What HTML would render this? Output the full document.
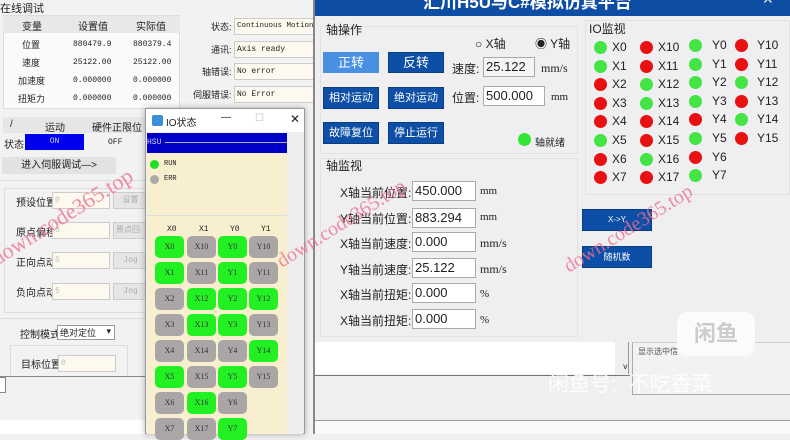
<!DOCTYPE html><html><head><meta charset="utf-8"><style>
*{margin:0;padding:0;box-sizing:border-box}
body{width:790px;height:434px;overflow:hidden;background:#f0f0f0;position:relative;font-family:"Liberation Sans","Noto Sans CJK SC",sans-serif;font-size:11px;color:#222}
.a{position:absolute}
.m{font-family:"Liberation Mono","Noto Sans CJK SC",monospace;font-size:8px}
.inp{position:absolute;background:#fff;border:1px solid #aaa;font-size:13px;padding-left:2px;line-height:18px}
.btn{position:absolute;background:#0d4ea6;color:#fff;text-align:center;font-size:12px;border:1px solid #0a3d80}
.io{position:absolute;width:29px;height:22px;border-radius:5px;background:#aaa6a6;font-size:8px;text-align:center;line-height:22px;font-family:"Liberation Serif",serif;color:#333}
.g{background:#22f022}
.d{position:absolute;width:13px;height:13px;border-radius:50%}
.dg{background:#44e444}.dr{background:#e81010}
.lb{position:absolute;font-size:12px}
.fld{position:absolute;background:#fdf9ee;border:1px solid #ccc;height:17px;font-family:"Liberation Mono",monospace;font-size:8px;line-height:15px;padding-left:2px;white-space:nowrap;overflow:hidden}
.wm{position:absolute;color:#f07090;font-family:"Liberation Serif",serif;font-size:20px;transform:rotate(-32deg);transform-origin:left bottom;white-space:nowrap;opacity:.8}
</style></head><body>
<div class="a" style="left:0;top:0;width:315px;height:434px;background:#f2f2f2"></div>
<div class="a" style="left:0;top:0;font-size:11px">在线调试</div>
<div class="a" style="left:3px;top:15px;width:177px;height:94px;background:#fafafa;border:1px solid #ddd"></div>
<div class="a" style="left:3px;top:16px;width:177px;height:17px;background:#e8e8e8"></div>
<div class="a" style="left:0;top:18px;width:315px;font-size:10px">
<span class="a" style="left:22px">变量</span><span class="a" style="left:78px">设置值</span><span class="a" style="left:136px">实际值</span></div>
<div class="a" style="left:0;top:36px;font-size:9px;line-height:18px;width:180px">
<div style="position:relative;height:18px"><span class="a" style="left:22px">位置</span><span class="a m" style="left:73px">880479.9</span><span class="a m" style="left:133px">880379.4</span></div>
<div style="position:relative;height:18px"><span class="a" style="left:22px">速度</span><span class="a m" style="left:73px">25122.00</span><span class="a m" style="left:133px">25122.00</span></div>
<div style="position:relative;height:18px"><span class="a" style="left:18px">加速度</span><span class="a m" style="left:73px">0.000000</span><span class="a m" style="left:133px">0.000000</span></div>
<div style="position:relative;height:18px"><span class="a" style="left:18px">扭矩力</span><span class="a m" style="left:73px">0.000000</span><span class="a m" style="left:133px">0.000000</span></div></div>
<div class="a" style="left:211px;top:20px;font-size:9px">状态:</div><div class="fld" style="left:234px;top:18px;width:82px;font-size:7.5px">Continuous Motion</div>
<div class="a" style="left:211px;top:43px;font-size:9px">通讯:</div><div class="fld" style="left:234px;top:41px;width:82px">Axis ready</div>
<div class="a" style="left:202px;top:65px;font-size:9px">轴错误:</div><div class="fld" style="left:234px;top:63px;width:82px">No error</div>
<div class="a" style="left:193px;top:88px;font-size:9px">伺服错误:</div><div class="fld" style="left:234px;top:86px;width:82px">No Error</div>
<div class="a" style="left:3px;top:117px;width:145px;height:16px;background:#e6e6e6"></div>
<div class="a" style="left:10px;top:119px;font-size:10px">/</div><div class="a" style="left:45px;top:119px;font-size:10px">运动</div><div class="a" style="left:92px;top:119px;font-size:10px">硬件正限位</div>
<div class="a" style="left:4px;top:136px;font-size:10px">状态</div>
<div class="a m" style="left:25px;top:134px;width:59px;height:16px;background:#0000ee;color:#ccf;text-align:center;line-height:16px">ON</div>
<div class="a m" style="left:108px;top:138px">OFF</div>
<div class="a" style="left:2px;top:157px;width:114px;height:17px;background:#e2e2e2;font-size:10px;text-align:center;line-height:17px">进入伺服调试—></div>
<div class="a" style="left:0;top:180px;width:145px;border-top:1px solid #ddd"></div>
<div class="a" style="left:4px;top:188px;width:142px;height:125px;border:1px solid #ddd"></div>
<div class="a" style="left:16px;top:194px;font-size:10px">预设位置</div><div class="fld" style="left:52px;top:192px;width:58px;color:#bbb">0</div><div class="fld" style="left:113px;top:192px;width:33px;background:#e6e6e6;color:#aaa;text-align:center">设置</div>
<div class="a" style="left:16px;top:224px;font-size:10px">原点偏移</div><div class="fld" style="left:52px;top:222px;width:58px;color:#bbb">0</div><div class="fld" style="left:113px;top:222px;width:33px;background:#e6e6e6;color:#aaa">原点回</div>
<div class="a" style="left:16px;top:254px;font-size:10px">正向点动</div><div class="fld" style="left:52px;top:252px;width:58px;color:#bbb">5</div><div class="fld" style="left:113px;top:252px;width:33px;background:#e6e6e6;color:#aaa;text-align:center">Jog</div>
<div class="a" style="left:16px;top:284px;font-size:10px">负向点动</div><div class="fld" style="left:52px;top:283px;width:58px;color:#bbb">5</div><div class="fld" style="left:113px;top:283px;width:33px;background:#e6e6e6;color:#aaa;text-align:center">Jog</div>
<div class="a" style="left:0;top:318px;width:145px;border-top:1px solid #ddd"></div>
<div class="a" style="left:20px;top:326px;font-size:10px">控制模式</div>
<div class="a" style="left:57px;top:325px;width:58px;height:15px;background:#fff;border:1px solid #999;font-size:9px;padding-left:2px">绝对定位 <span style="float:right;padding-right:3px">▾</span></div>
<div class="a" style="left:10px;top:345px;width:118px;height:32px;border:1px solid #ddd"></div>
<div class="a" style="left:21px;top:356px;font-size:10px">目标位置</div><div class="fld" style="left:58px;top:355px;width:58px;color:#bbb">0</div>
<div class="a" style="left:0;top:376px;width:145px;border-top:1px solid #888"></div>
<div class="a" style="left:0;top:377px;width:6px;height:16px;border:1px solid #888;border-left:0;background:#fff"></div>
<div class="a" style="left:0;top:420px;width:145px;height:14px;background:#fff"></div>
<div class="a" style="left:313px;top:0;width:477px;height:434px;background:#efeff1;border-left:2px solid #888"></div>
<div class="a" style="left:315px;top:0;width:475px;height:16px;background:#0d4da3;overflow:hidden"><div class="a" style="left:108px;top:-12px;color:#fff;font-weight:bold;font-size:17px">汇川H5U与C#模拟仿真平台</div><div class="a" style="left:447px;top:-9px;color:#ddd;font-size:14px">✕</div></div>
<div class="a" style="left:320px;top:26px;width:258px;height:128px;border:1px solid #e2e2e2"></div>
<div class="lb" style="left:326px;top:21px">轴操作</div>
<div class="a" style="left:475px;top:35px;font-size:12px">○ X轴</div><div class="a" style="left:535px;top:35px;font-size:12px">◉ Y轴</div>
<div class="btn" style="left:323px;top:52px;width:56px;height:21px;background:#4a90e2;border-color:#4a90e2;line-height:19px;font-size:13px">正转</div>
<div class="btn" style="left:388px;top:52px;width:56px;height:21px;line-height:19px;font-size:13px">反转</div>
<div class="btn" style="left:323px;top:87px;width:56px;height:22px;line-height:20px;font-size:11px">相对运动</div>
<div class="btn" style="left:388px;top:87px;width:56px;height:22px;line-height:20px;font-size:11px">绝对运动</div>
<div class="btn" style="left:323px;top:122px;width:56px;height:22px;line-height:20px;font-size:11px">故障复位</div>
<div class="btn" style="left:388px;top:122px;width:56px;height:22px;line-height:20px;font-size:11px">停止运行</div>
<div class="lb" style="left:452px;top:60px">速度:</div><div class="inp" style="left:483px;top:57px;width:52px;height:20px;background:#f5f5f5">25.122</div><div class="a" style="left:541px;top:61px;font-family:'Liberation Serif',serif;font-size:12px">mm/s</div>
<div class="lb" style="left:452px;top:89px">位置:</div><div class="inp" style="left:483px;top:86px;width:62px;height:20px">500.000</div><div class="a" style="left:551px;top:91px;font-family:'Liberation Serif',serif;font-size:11px">mm</div>
<div class="d" style="left:518px;top:133px;background:#33e633"></div><div class="a" style="left:535px;top:134px;font-size:10px">轴就绪</div>
<div class="a" style="left:320px;top:158px;width:258px;height:179px;border:1px solid #e2e2e2"></div>
<div class="lb" style="left:326px;top:157px">轴监视</div>
<div class="lb" style="left:340px;top:184px">X轴当前位置:</div><div class="inp" style="left:412px;top:181px;width:64px;height:20px">450.000</div><div class="a" style="left:480px;top:185px;font-family:'Liberation Serif',serif">mm</div>
<div class="lb" style="left:340px;top:210px">Y轴当前位置:</div><div class="inp" style="left:412px;top:208px;width:64px;height:20px">883.294</div><div class="a" style="left:480px;top:211px;font-family:'Liberation Serif',serif">mm</div>
<div class="lb" style="left:340px;top:235px">X轴当前速度:</div><div class="inp" style="left:412px;top:232px;width:64px;height:20px">0.000</div><div class="a" style="left:480px;top:236px;font-family:'Liberation Serif',serif;font-size:12px">mm/s</div>
<div class="lb" style="left:340px;top:261px">Y轴当前速度:</div><div class="inp" style="left:412px;top:258px;width:64px;height:20px">25.122</div><div class="a" style="left:480px;top:262px;font-family:'Liberation Serif',serif;font-size:12px">mm/s</div>
<div class="lb" style="left:340px;top:286px">X轴当前扭矩:</div><div class="inp" style="left:412px;top:283px;width:64px;height:20px">0.000</div><div class="a" style="left:480px;top:288px;font-family:'Liberation Serif',serif">%</div>
<div class="lb" style="left:340px;top:312px">X轴当前扭矩:</div><div class="inp" style="left:412px;top:309px;width:64px;height:20px">0.000</div><div class="a" style="left:480px;top:314px;font-family:'Liberation Serif',serif">%</div>
<div class="a" style="left:315px;top:342px;width:300px;height:32px;background:#fff"></div>
<div class="a" style="left:615px;top:342px;width:14px;height:32px;border-right:1px solid #999;font-size:9px;text-align:right;padding-top:20px">˅</div>
<div class="a" style="left:315px;top:375px;width:475px;border-top:1px solid #777"></div>
<div class="a" style="left:632px;top:342px;width:158px;height:53px;border-left:1px solid #aaa;border-top:1px solid #ccc;border-bottom:1px solid #aaa;background:#f2f2f2"><span style="font-size:8px;color:#555;position:absolute;left:5px;top:3px">显示选中信</span></div>
<div class="a" style="left:315px;top:420px;width:475px;border-top:1px solid #999"></div>
<div class="a" style="left:315px;top:421px;width:475px;height:13px;background:#fafafa"></div>
<div class="a" style="left:677px;top:312px;width:78px;height:44px;background:#fbfbfb;border-radius:10px;color:#ccc;font-size:22px;font-weight:bold;text-align:center;line-height:44px">闲鱼</div>
<div class="a" style="left:548px;top:368px;color:#fff;font-size:21px;opacity:.9">闲鱼号:&nbsp; 不吃香菜</div>
<div class="a" style="left:585px;top:20px;width:205px;height:175px;border:1px solid #e2e2e2"></div>
<div class="lb" style="left:589px;top:20px">IO监视</div>
<div id="iom"></div>
<div class="btn" style="left:582px;top:209px;width:70px;height:22px;font-size:8px;line-height:20px">X->Y</div>
<div class="btn" style="left:582px;top:246px;width:70px;height:22px;font-size:9px;line-height:20px">随机数</div>
<div class="a" style="left:145px;top:108px;width:160px;height:326px;background:#f0f0f0;border:1px solid #999;box-shadow:0 0 6px rgba(0,0,0,.3)"></div>
<div class="a" style="left:146px;top:109px;width:158px;height:23px;background:#fff"></div>
<div class="a" style="left:152px;top:115px;width:11px;height:11px;background:#3a8fd6;border-radius:2px"></div>
<div class="a" style="left:166px;top:114px;font-size:10px">IO状态</div>
<div class="a" style="left:221px;top:112px;font-size:10px">—</div><div class="a" style="left:255px;top:113px;font-size:10px;color:#bbb">☐</div><div class="a" style="left:290px;top:112px;font-size:12px">✕</div>
<div class="a" style="left:147px;top:133px;width:140px;height:20px;background:#0000c8"><span class="a m" style="left:0;top:5px;color:#cce">HSU</span><div class="a" style="left:18px;top:9px;width:122px;border-top:1px solid #aab"></div></div>
<div class="a" style="left:147px;top:153px;width:140px;height:281px;background:#f8efcf"></div>
<div class="a" style="left:287px;top:133px;width:16px;height:301px;background:#eeeeee"></div>
<div class="d" style="left:150px;top:160px;width:9px;height:9px;background:#22dd22"></div><div class="a m" style="left:164px;top:160px;font-size:7px">RUN</div>
<div class="d" style="left:150px;top:175px;width:9px;height:9px;background:#aaa"></div><div class="a m" style="left:164px;top:175px;font-size:7px">ERR</div>
<div class="a" style="left:147px;top:215px;width:140px;border-top:1px solid #ddd"></div>
<div class="a m" style="left:167px;top:225px">X0</div><div class="a m" style="left:199px;top:225px">X1</div><div class="a m" style="left:230px;top:225px">Y0</div><div class="a m" style="left:261px;top:225px">Y1</div>
<div id="iob"></div>
<div class="wm" style="left:0px;top:245px;font-size:22px">down.code365.top</div>
<div class="wm" style="left:285px;top:250px">down.code365.top</div>
<div class="wm" style="left:572px;top:255px">down.code365.top</div>
<script>
var b='',on=[[1,0,1,0],[1,0,1,0],[0,1,1,1],[0,1,1,0],[0,0,0,1],[1,0,1,0],[0,1,0,-1],[0,0,1,-1]];
var cx=[155,187,218,249];
for(var r=0;r<8;r++)for(var c=0;c<4;c++){if(on[r][c]<0)continue;var n=(c==0?'X'+r:c==1?'X1'+r:c==2?'Y'+r:'Y1'+r);
b+='<div class="io'+(on[r][c]?' g':'')+'" style="left:'+cx[c]+'px;top:'+(236+r*26)+'px">'+n+'</div>';}
document.getElementById('iob').innerHTML=b;
var m='',xs=[1,1,0,0,0,1,0,0],x1=[0,0,1,1,0,0,1,0],ys=[1,1,1,1,0,1,0,1],y1=[0,0,1,0,1,0];
var dx=[594,640,689,735],lx=[612,658,712,757];
for(var r=0;r<8;r++){var yy=41+r*18.6;
var s=[xs[r],x1[r],ys[r],r<6?y1[r]:-1];var nm=['X'+r,'X1'+r,'Y'+r,'Y1'+r];
for(var c=0;c<4;c++){if(s[c]<0)continue;var off=c>=2?-2:0;
m+='<div class="d '+(s[c]?'dg':'dr')+'" style="left:'+dx[c]+'px;top:'+(yy+off)+'px"></div><div class="lb" style="left:'+lx[c]+'px;top:'+(yy-1+off)+'px">'+nm[c]+'</div>';}}
document.getElementById('iom').innerHTML=m;
</script>
</body></html>
